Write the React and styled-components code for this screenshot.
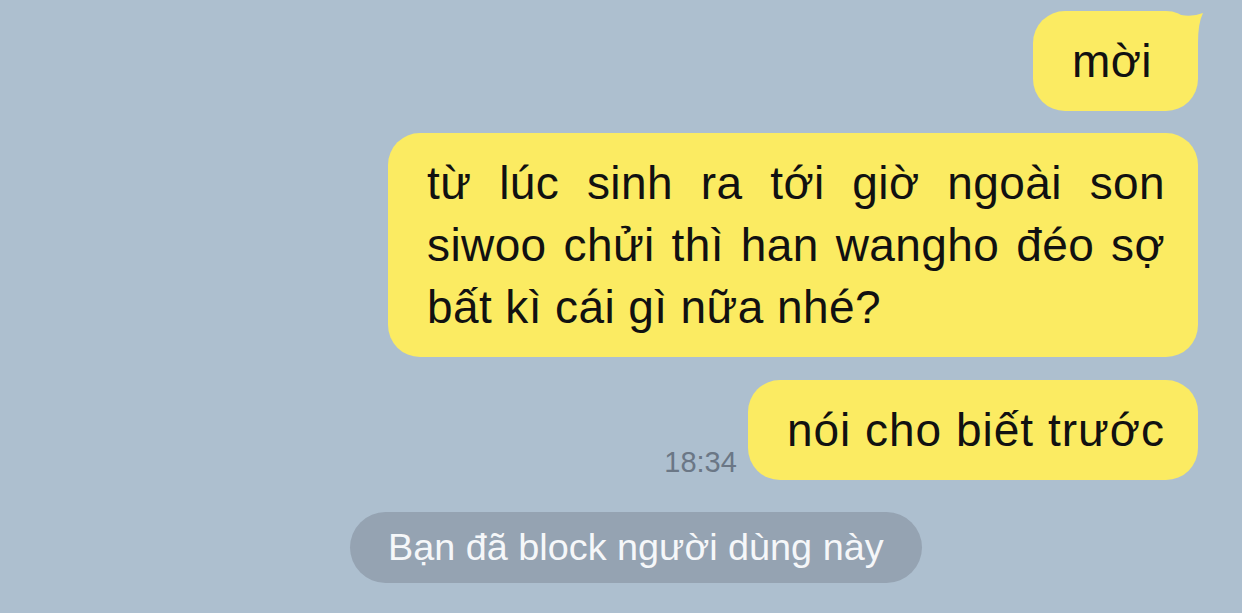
import React from "react";
import styled, { createGlobalStyle } from "styled-components";

const Global = createGlobalStyle`
  html, body { margin: 0; padding: 0; }
  body {
    background: #adbfcf;
    font-family: "Liberation Sans", Arial, sans-serif;
    -webkit-font-smoothing: antialiased;
  }
`;

const Screen = styled.div`
  width: 1242px;
  height: 613px;
  box-sizing: border-box;
  background: #adbfcf;
  padding: 11px 44px 0 0;
  display: flex;
  flex-direction: column;
  align-items: flex-end;
  overflow: hidden;
`;

const Row = styled.div`
  display: flex;
  align-items: flex-end;
  justify-content: flex-end;
  gap: 11px;
  margin-top: ${(p) => p.$gap || 0}px;
`;

const Bubble = styled.div`
  position: relative;
  box-sizing: border-box;
  background: #fbeb62;
  color: #111;
  border-radius: 32px;
  padding: 19px 33px 19px 39px;
  min-width: ${(p) => p.$minWidth || 0}px;
  width: ${(p) => (p.$width ? p.$width + "px" : "auto")};
  font-family: "Liberation Sans", Arial, sans-serif;
  font-size: 46px;
  line-height: 62px;
  letter-spacing: ${(p) => p.$spacing ?? 0.4}px;
  white-space: nowrap;
`;

const Line = styled.span`
  display: block;
  text-align: ${(p) => (p.$justify ? "justify" : "left")};
  text-align-last: ${(p) => (p.$justify ? "justify" : "auto")};
  white-space: nowrap;
`;

const Tail = styled.svg`
  position: absolute;
  top: 0;
  left: 0;
  overflow: visible;
  pointer-events: none;
`;

const Time = styled.span`
  font-family: "Liberation Sans", Arial, sans-serif;
  font-size: 29px;
  line-height: 29px;
  color: #6b7786;
  padding-bottom: 3px;
`;

const NoticeRow = styled.div`
  align-self: stretch;
  display: flex;
  justify-content: flex-start;
  padding-left: 350px;
  margin-top: 32px;
`;

const Notice = styled.div`
  height: 71px;
  box-sizing: border-box;
  padding: 0 38px;
  border-radius: 36px;
  background: #95a3b2;
  color: #f5f7f9;
  font-family: "Liberation Sans", Arial, sans-serif;
  font-size: 37.8px;
  display: flex;
  align-items: center;
  justify-content: center;
  white-space: nowrap;
`;

export default function App() {
  return (
    <>
      <Global />
      <Screen>
        <Row>
          <Bubble $minWidth={165}>
            <Tail width="165" height="40">
              <path d="M148 4 Q160 6 170 2 Q165 12 165 32 L148 32 Z" fill="#fbeb62" />
            </Tail>
            mời
          </Bubble>
        </Row>
        <Row $gap={22}>
          <Bubble $width={810}>
            <Line $justify>từ lúc sinh ra tới giờ ngoài son</Line>
            <Line $justify>siwoo chửi thì han wangho đéo sợ</Line>
            <Line>bất kì cái gì nữa nhé?</Line>
          </Bubble>
        </Row>
        <Row $gap={23}>
          <Time>18:34</Time>
          <Bubble $spacing={1.0}>nói cho biết trước</Bubble>
        </Row>
        <NoticeRow>
          <Notice>Bạn đã block người dùng này</Notice>
        </NoticeRow>
      </Screen>
    </>
  );
}
